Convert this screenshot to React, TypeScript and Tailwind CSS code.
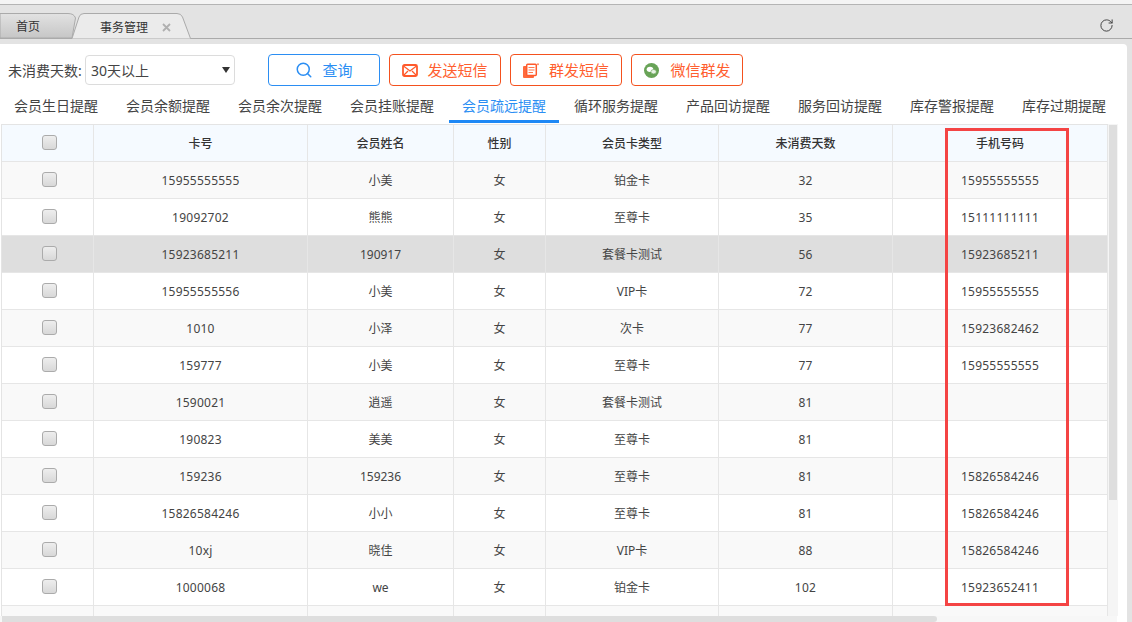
import { RotateCw, Search } from 'lucide-react'

const tips = ['会员生日提醒', '会员余额提醒', '会员余次提醒', '会员挂账提醒', '会员疏远提醒', '循环服务提醒', '产品回访提醒', '服务回访提醒', '库存警报提醒', '库存过期提醒']

const rows = [
  ['15955555555', '小美', '女', '铂金卡', '32', '15955555555'],
  ['19092702', '熊熊', '女', '至尊卡', '35', '15111111111'],
  ['15923685211', '190917', '女', '套餐卡测试', '56', '15923685211'],
  ['15955555556', '小美', '女', 'VIP卡', '72', '15955555555'],
  ['1010', '小泽', '女', '次卡', '77', '15923682462'],
  ['159777', '小美', '女', '至尊卡', '77', '15955555555'],
  ['1590021', '逍遥', '女', '套餐卡测试', '81', ''],
  ['190823', '美美', '女', '至尊卡', '81', ''],
  ['159236', '159236', '女', '至尊卡', '81', '15826584246'],
  ['15826584246', '小小', '女', '至尊卡', '81', '15826584246'],
  ['10xj', '晓佳', '女', 'VIP卡', '88', '15826584246'],
  ['1000068', 'we', '女', '铂金卡', '102', '15923652411'],
]

function Check() {
  return <span className="block ml-[40px] mb-[1px] w-[15px] h-[15px] rounded-[3px] border border-[#ababab] bg-gradient-to-b from-[#eeeeee] to-[#d8d8d8]" />
}

function MailIcon() {
  return (
    <svg width="16" height="13" viewBox="0 0 16 13" fill="none" stroke="#ff5a2c" strokeWidth="1.8">
      <rect x="1" y="1" width="14" height="11" rx="1.5" />
      <path d="M1.5 2l6.5 5 6.5-5M1.5 11.5l4.5-4.5M14.5 11.5L10 7" strokeWidth="1.3" />
    </svg>
  )
}

function NotesIcon() {
  return (
    <svg width="16" height="15" viewBox="0 0 16 15">
      <rect x="0" y="3" width="11" height="12" rx="1" fill="#ff6a3c" />
      <rect x="3.7" y="1.2" width="9.6" height="11.3" rx="1" fill="#ffffff" stroke="#ff5a2c" strokeWidth="1.5" />
      <path d="M5.5 4.5h6M5.5 7h6M5.5 9.5h4.5" stroke="#ff7a50" strokeWidth="1.1" />
      <circle cx="15" cy="1.2" r="1" fill="#ff8a60" />
    </svg>
  )
}

function WechatIcon() {
  return (
    <svg width="15" height="15" viewBox="0 0 15 15">
      <circle cx="7.5" cy="7.5" r="7.5" fill="#68a357" />
      <ellipse cx="6" cy="6.3" rx="3.3" ry="2.6" fill="#ffffff" />
      <ellipse cx="9.6" cy="8.7" rx="2.7" ry="2.2" fill="#e8f2e4" stroke="#68a357" strokeWidth="0.6" />
    </svg>
  )
}

function ActionButton({ icon, label, className }: { icon: React.ReactNode; label: string; className: string }) {
  return (
    <button className={`w-[112px] h-[32px] flex items-center justify-center rounded-[4px] border bg-white text-[15px] ${className}`}>
      {icon}
      <span>{label}</span>
    </button>
  )
}

function BrowserTab({ active }: { active?: boolean }) {
  if (active) {
    return (
      <div className="relative w-[119px] h-[26px] -ml-[4px] -mb-[1px] flex items-center pl-[28px] pt-[3px] gap-[14px] text-[12px] text-[#333333]">
        <svg className="absolute inset-0" width="119" height="26" viewBox="0 0 119 26">
          <path d="M0 25.5L7 4Q8 .5 12 .5H105Q109 .5 110.5 4L118.5 25.5" fill="#ebebeb" stroke="#aaaaaa" />
        </svg>
        <span className="relative">事务管理</span>
        <svg className="relative" width="9" height="9" viewBox="0 0 9 9" stroke="#b0b0b0" strokeWidth="1.8">
          <path d="M1 1l7 7M8 1L1 8" />
        </svg>
      </div>
    )
  }
  return (
    <div className="relative w-[76px] h-[25px] flex items-center pl-[16px] pt-[3px] text-[12px] text-[#333333]">
      <svg className="absolute inset-0" width="76" height="25" viewBox="0 0 76 25">
        <defs>
          <linearGradient id="idle" x1="0" y1="0" x2="0" y2="1">
            <stop offset="0" stopColor="#e2e2e2" />
            <stop offset="1" stopColor="#c6c6c6" />
          </linearGradient>
        </defs>
        <path d="M0 .5H68Q74 .5 75.5 5L72 25H0Z" fill="url(#idle)" stroke="#aaaaaa" />
      </svg>
      <span className="relative">首页</span>
    </div>
  )
}

export default function App() {
  return (
    <div className="relative w-[1132px] h-[622px] overflow-hidden bg-[#e3e3e3] font-['Noto_Sans','Noto_Sans_CJK_SC',sans-serif] text-[#444444]">
      <div className="h-[4px] bg-[#f4f4f4]" />
      <div className="h-[40px] border-t border-[#b4b4b4] bg-[#e3e3e3]">
        <div className="h-[34px] flex items-end justify-between border-b border-[#aaaaaa] pr-[18px]">
          <div className="flex items-end">
            <BrowserTab />
            <BrowserTab active />
          </div>
          <RotateCw className="mb-[5px] text-[#444444]" size={15} strokeWidth={1.6} />
        </div>
      </div>

      <div className="w-[1127px] h-[578px] rounded-tr-[4px] bg-white">
        <div className="pt-[10px] h-[42px] flex items-center pl-[8px]">
          <span className="text-[14px] w-[77px]">未消费天数:</span>
          <div className="w-[150px] h-[30px] flex items-center justify-between rounded-[4px] border border-[#dcdcdc] pl-[5px] pr-[4px] text-[14px]">
            <span>30天以上</span>
            <svg width="8" height="6" viewBox="0 0 8 6" fill="#333333"><path d="M0 0h8L4 6z" /></svg>
          </div>
          <div className="ml-[33px] flex gap-[9px]">
            <ActionButton className="gap-[9px] border-[#2b8ef3] text-[#2b8ef3]" icon={<Search size={18} strokeWidth={2} />} label="查询" />
            <ActionButton className="gap-[9px] border-[#f4511e] text-[#ff5f30]" icon={<MailIcon />} label="发送短信" />
            <ActionButton className="gap-[10px] border-[#f4511e] text-[#ff5f30]" icon={<NotesIcon />} label="群发短信" />
            <ActionButton className="gap-[11px] pl-[1px] border-[#f4511e] text-[#ff5f30]" icon={<WechatIcon />} label="微信群发" />
          </div>
        </div>

        <div className="h-[38px] flex">
          {tips.map((t) => (
            <div key={t} className="w-[112px] shrink-0 flex justify-center">
              <span
                className={
                  t === '会员疏远提醒'
                    ? 'w-[110px] h-[37px] pt-[9px] text-center text-[14px] text-[#2b8ef3] border-b-[3px] border-[#1e88f5]'
                    : 'h-[37px] pt-[9px] text-[14px] text-[#444444]'
                }
              >
                {t}
              </span>
            </div>
          ))}
        </div>

        <div className="relative h-[492px] ml-[1px]">
          <div className="flex h-[492px]">
            <div className="w-[1107px] h-[492px] overflow-hidden border-t border-[#e4e4e4] border-l">
              <table className="table-fixed border-separate border-spacing-0 w-[1106px] text-[12px]">
                <colgroup>
                  <col className="w-[92px]" />
                  <col className="w-[214px]" />
                  <col className="w-[146px]" />
                  <col className="w-[92px]" />
                  <col className="w-[173px]" />
                  <col className="w-[174px]" />
                  <col className="w-[215px]" />
                </colgroup>
                <thead>
                  <tr className="bg-[#f5faff] font-medium text-[#333333]">
                    <th className="h-[37px] p-0 border-r border-b border-[#e6e6e6]"><Check /></th>
                    {['卡号', '会员姓名', '性别', '会员卡类型', '未消费天数', '手机号码'].map((h) => (
                      <th key={h} className="h-[37px] p-0 pt-[2px] font-medium border-r border-b border-[#e6e6e6]">{h}</th>
                    ))}
                  </tr>
                </thead>
                <tbody>
                  {rows.map((r, i) => (
                    <tr key={r[0]} className={i === 2 ? 'bg-[#dedede]' : i % 2 === 0 ? 'bg-[#f9f9f9]' : 'bg-white'}>
                      <td className="h-[37px] p-0 border-r border-b border-[#e6e6e6]"><Check /></td>
                      {r.map((c, j) => (
                        <td key={j} className={j === 0 || j === 4 || j === 5 ? 'h-[37px] p-0 pt-[2px] text-center tracking-[0.23px] border-r border-b border-[#e6e6e6]' : 'h-[37px] p-0 pt-[2px] text-center border-r border-b border-[#e6e6e6]'}>
                          {c}
                        </td>
                      ))}
                    </tr>
                  ))}
                  <tr className="bg-[#f9f9f9]">
                    {[0, 1, 2, 3, 4, 5, 6].map((k) => (
                      <td key={k} className="h-[37px] p-0 border-r border-[#e6e6e6]" />
                    ))}
                  </tr>
                </tbody>
              </table>
            </div>
            <div className="w-[10px] h-[492px] bg-[#f5f5f5] pl-[1px] pr-[1px] pt-[1px]">
              <div className="h-[375px] bg-[#dedede]" />
            </div>
          </div>
          <div className="absolute left-[944px] top-[4px] w-[124px] h-[478px] border-[3px] border-[#f44444]" />
        </div>

        <div className="h-[6px] w-[1117px] bg-[#f7f7f7]">
          <div className="h-[6px] ml-[2px] w-[935px] rounded-r-[3px] bg-[#dedede]" />
        </div>
      </div>
    </div>
  )
}
